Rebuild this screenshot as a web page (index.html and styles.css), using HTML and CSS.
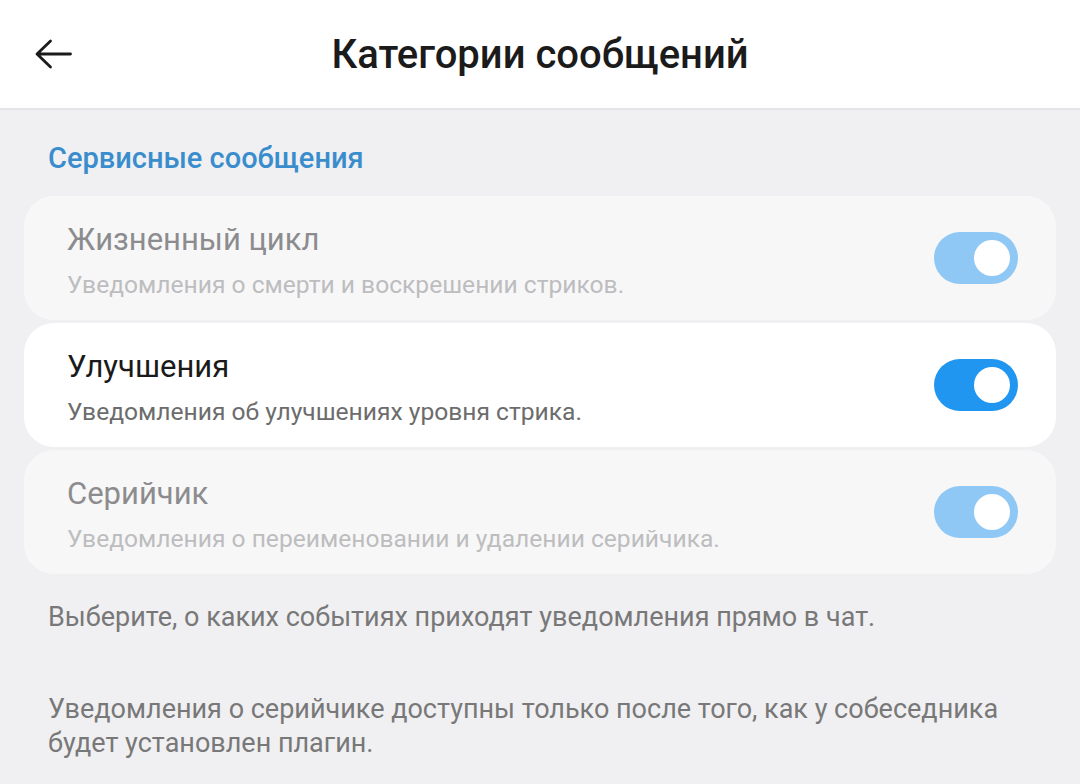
FILE: index.html
```html
<!DOCTYPE html>
<html lang="ru">
<head>
    <meta charset="UTF-8">
    <meta name="viewport" content="width=device-width, initial-scale=1.0">
    <title>Категории сообщений</title>
    <link rel="stylesheet" href="styles.css">
</head>
<body>
    <header class="topbar">
        <button class="back" aria-label="Назад">
            <svg width="40" height="36" viewBox="0 0 40 36">
                <path d="M37.5 18H4.5M17.5 5L4 18L17.5 31" fill="none" stroke="#1b1b1b" stroke-width="2.8" stroke-linecap="round" stroke-linejoin="round"/>
            </svg>
        </button>
        <h1 class="title">Категории сообщений</h1>
    </header>

    <main class="content">
        <h2 class="section-label">Сервисные сообщения</h2>

        <div class="list">
            <div class="item disabled">
                <div class="item-text">
                    <div class="item-title">Жизненный цикл</div>
                    <div class="item-sub">Уведомления о смерти и воскрешении стриков.</div>
                </div>
                <span class="switch on"><span class="knob"></span></span>
            </div>
            <div class="item">
                <div class="item-text">
                    <div class="item-title">Улучшения</div>
                    <div class="item-sub">Уведомления об улучшениях уровня стрика.</div>
                </div>
                <span class="switch on"><span class="knob"></span></span>
            </div>
            <div class="item disabled">
                <div class="item-text">
                    <div class="item-title">Серийчик</div>
                    <div class="item-sub">Уведомления о переименовании и удалении серийчика.</div>
                </div>
                <span class="switch on"><span class="knob"></span></span>
            </div>
        </div>

        <p class="hint">Выберите, о каких событиях приходят уведомления прямо в чат.</p>
        <p class="hint">Уведомления о серийчике доступны только после того, как у собеседника будет установлен плагин.</p>
    </main>
</body>
</html>
```

FILE: styles.css
```css
body {
    margin: 0;
    background-color: #f0f0f2;
    font-family: Roboto, "Noto Sans", sans-serif;
    width: 1080px;
    height: 784px;
    overflow: hidden;
}

.topbar {
    height: 108px;
    background-color: #fff;
    border-bottom: 2px solid #e4e4e6;
    display: flex;
    align-items: center;
}

.back {
    background: none;
    border: none;
    padding: 0;
    margin-left: 33px;
    width: 40px;
    height: 36px;
    cursor: pointer;
}

.back svg {
    display: block;
}

.title {
    flex: 1;
    margin: 0 0 0 -73px;
    text-align: center;
    font-size: 40px;
    font-weight: 500;
    color: #1b1b1b;
}

.content {
    padding: 0 24px;
}

.section-label {
    margin: 0;
    padding: 32px 24px 22px;
    font-size: 29px;
    font-weight: 500;
    color: #3a8dcd;
    line-height: 32px;
}

.list {
    display: flex;
    flex-direction: column;
    gap: 3px;
}

.item {
    background-color: #fff;
    border-radius: 30px;
    height: 124px;
    display: flex;
    align-items: center;
    padding: 0 38px 0 43px;
    box-sizing: border-box;
}

.item.disabled {
    background-color: #f7f7f8;
}

.item-text {
    flex: 1;
    align-self: flex-start;
    padding-top: 24px;
}

.item-title {
    font-size: 31px;
    color: #1a1a1a;
    line-height: 40px;
}

.item-sub {
    font-size: 24.6px;
    color: #6c6c6c;
    line-height: 30px;
    margin-top: 10px;
}

.disabled .item-title {
    color: #8c8c8e;
}

.disabled .item-sub {
    color: #bdbdbf;
}

.switch {
    width: 84px;
    height: 52px;
    border-radius: 26px;
    background-color: #2196f0;
    display: flex;
    align-items: center;
    justify-content: flex-end;
    padding: 0 8px;
    box-sizing: border-box;
}

.disabled .switch {
    background-color: #8fc8f4;
}

.knob {
    width: 36px;
    height: 36px;
    border-radius: 50%;
    background-color: #fff;
}

.hint {
    margin: 0;
    padding: 26px 24px 34px;
    font-size: 27px;
    line-height: 34px;
    color: #787878;
}

.hint + .hint {
    padding-top: 24px;
}
```
